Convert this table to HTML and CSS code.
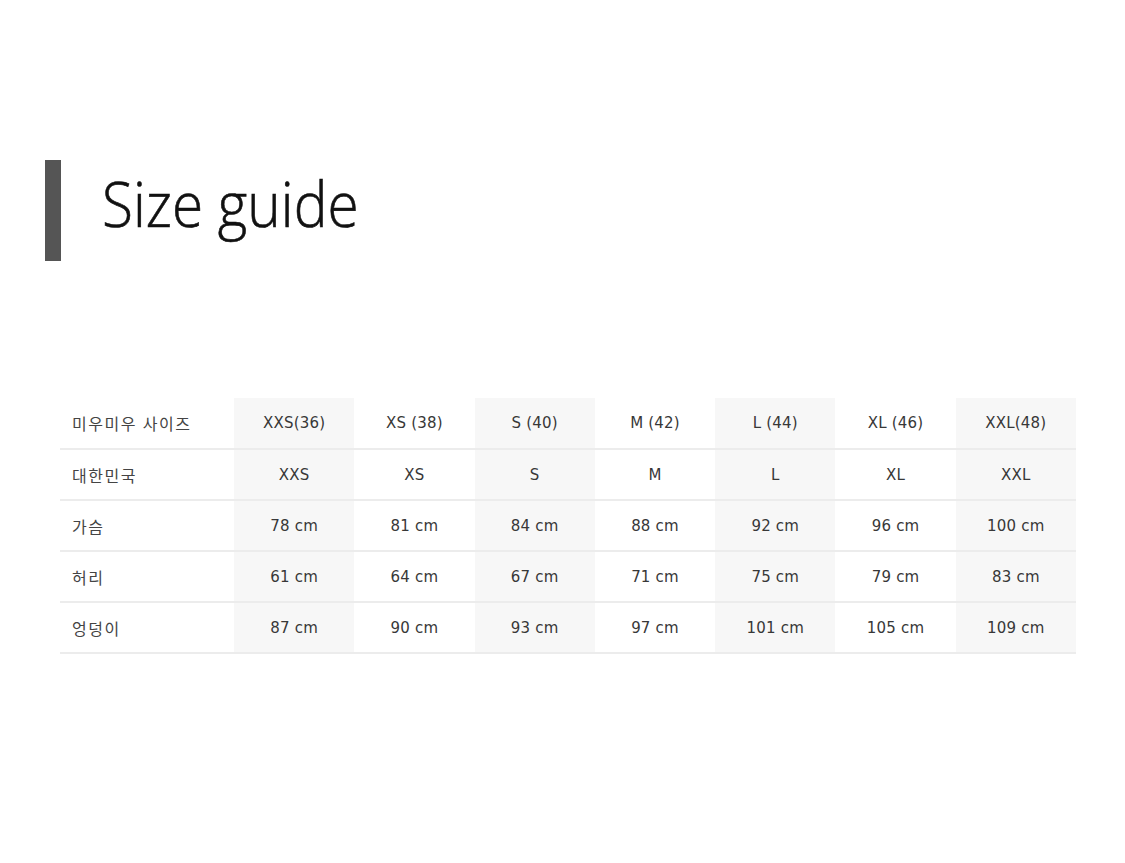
FILE: index.html
```html
<!DOCTYPE html>
<html lang="ko">
<head>
<meta charset="utf-8">
<title>Size guide</title>
<link rel="stylesheet" href="styles.css">
</head>
<body>
<div class="page">
  <header class="title">
    <span class="bar"></span>
    <h1 class="title-text">Size guide</h1>
  </header>
  <table class="sizes">
    <colgroup>
      <col class="c-label">
      <col class="c-shade"><col><col class="c-shade"><col><col class="c-shade"><col><col class="c-shade">
    </colgroup>
    <tr>
      <th class="label">미우미우 사이즈</th>
      <td>XXS(36)</td><td>XS (38)</td><td>S (40)</td><td>M (42)</td><td>L (44)</td><td>XL (46)</td><td>XXL(48)</td>
    </tr>
    <tr>
      <th class="label">대한민국</th>
      <td>XXS</td><td>XS</td><td>S</td><td>M</td><td>L</td><td>XL</td><td>XXL</td>
    </tr>
    <tr>
      <th class="label">가슴</th>
      <td>78 cm</td><td>81 cm</td><td>84 cm</td><td>88 cm</td><td>92 cm</td><td>96 cm</td><td>100 cm</td>
    </tr>
    <tr>
      <th class="label">허리</th>
      <td>61 cm</td><td>64 cm</td><td>67 cm</td><td>71 cm</td><td>75 cm</td><td>79 cm</td><td>83 cm</td>
    </tr>
    <tr>
      <th class="label">엉덩이</th>
      <td>87 cm</td><td>90 cm</td><td>93 cm</td><td>97 cm</td><td>101 cm</td><td>105 cm</td><td>109 cm</td>
    </tr>
  </table>
</div>
</body>
</html>
```

FILE: styles.css
```css
html, body {
  margin: 0;
  padding: 0;
  background: #ffffff;
}

.page {
  width: 1125px;
  height: 863px;
  padding-top: 160px;
  box-sizing: border-box;
}

.title {
  display: flex;
  align-items: flex-start;
  margin-left: 45px;
  height: 101px;
}

.bar {
  width: 16px;
  height: 101px;
  background: #555555;
  flex: none;
}

.title-text {
  margin: 12px 0 0 41px;
  font-family: "Open Sans", "Noto Sans", sans-serif;
  font-weight: 300;
  font-size: 62px;
  line-height: 62px;
  color: #111111;
  -webkit-text-stroke: 0.6px #111111;
  transform: scaleX(0.915);
  transform-origin: left center;
  white-space: nowrap;
}

.sizes {
  margin: 137px 0 0 60px;
  width: 1016px;
  border-collapse: collapse;
  table-layout: fixed;
  font-family: "DejaVu Sans", "Noto Sans CJK KR", sans-serif;
  font-size: 15px;
  letter-spacing: 0.2px;
  color: #383838;
}

.c-label {
  width: 174px;
}

.c-shade {
  background: #f7f7f7;
}

.sizes tr {
  height: 51px;
}

.sizes th,
.sizes td {
  padding: 0;
  border-bottom: 2px solid #ececec;
  text-align: center;
  vertical-align: middle;
  font-weight: 400;
}

.sizes .label {
  text-align: left;
  padding-left: 12px;
  font-family: "Noto Sans CJK KR", sans-serif;
  font-size: 16px;
  letter-spacing: 1.5px;
  color: #444444;
  background: #ffffff;
}
```
